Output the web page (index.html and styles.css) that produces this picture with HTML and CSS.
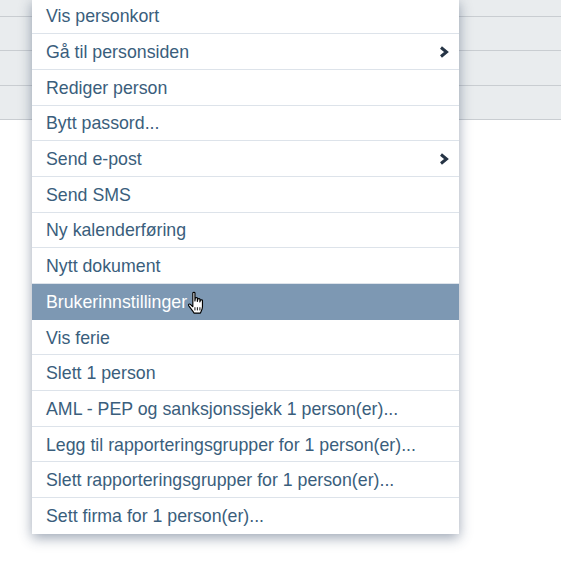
FILE: index.html
```html
<!DOCTYPE html>
<html lang="nb">

<head>
    <meta charset="UTF-8">
    <meta name="viewport" content="width=device-width, initial-scale=1.0">
    <title>Personmeny</title>
    <link rel="stylesheet" href="styles.css">
</head>

<body>

    <div class="rows">
        <div class="row first"></div>
        <div class="row"></div>
        <div class="row"></div>
        <div class="row"></div>
    </div>

    <ul class="menu">
        <li class="item">Vis personkort</li>
        <li class="item sub">Gå til personsiden
            <svg class="chev" viewBox="0 0 10 12" width="10" height="12"><path d="M2 1.5 L7.5 6 L2 10.5" fill="none" stroke="#263445" stroke-width="3"/></svg>
        </li>
        <li class="item">Rediger person</li>
        <li class="item">Bytt passord...</li>
        <li class="item sub">Send e-post
            <svg class="chev" viewBox="0 0 10 12" width="10" height="12"><path d="M2 1.5 L7.5 6 L2 10.5" fill="none" stroke="#263445" stroke-width="3"/></svg>
        </li>
        <li class="item">Send SMS</li>
        <li class="item">Ny kalenderføring</li>
        <li class="item">Nytt dokument</li>
        <li class="item active">Brukerinnstillinger
            <svg class="hand" viewBox="0 0 17 22" width="18" height="24">
                <path d="M5.5 1.5 C5.5 0.7 7.5 0.7 7.5 1.5 L7.5 9 L7.8 6.6 C7.8 5.8 9.8 5.8 9.8 6.6 L9.8 9.5 L10.2 7.4 C10.2 6.6 12.2 6.6 12.2 7.4 L12.2 10 L12.6 8.6 C12.6 7.9 14.6 7.9 14.6 8.6 L14.6 14.5 C14.6 17 13.4 18.5 12.6 20.5 L6.6 20.5 C5.6 18.6 3.5 16.2 1.6 13.6 C0.9 12.6 2.2 11.4 3.2 12.3 L5.5 14.5 Z" fill="#fff" stroke="#000" stroke-width="1.1" stroke-linejoin="round"/>
                <path d="M7.5 15 V18 M9.8 15 V18 M12.2 15 V18" stroke="#000" stroke-width="0.9"/>
            </svg>
        </li>
        <li class="item">Vis ferie</li>
        <li class="item">Slett 1 person</li>
        <li class="item">AML - PEP og sanksjonssjekk 1 person(er)...</li>
        <li class="item">Legg til rapporteringsgrupper for 1 person(er)...</li>
        <li class="item">Slett rapporteringsgrupper for 1 person(er)...</li>
        <li class="item">Sett firma for 1 person(er)...</li>
    </ul>

</body>

</html>
```

FILE: styles.css
```css
body {
    margin: 0;
    font-family: "Liberation Sans", Arial, sans-serif;
    background: #fff;
    position: relative;
    height: 586px;
    overflow: hidden;
}

.rows {
    background: #e9ecee;
}

.row {
    height: 34.5px;
    border-bottom: 1px solid #c9cdd1;
    box-sizing: border-box;
}

.row.first {
    height: 16.5px;
}

.menu {
    position: absolute;
    top: -1.5px;
    left: 32px;
    width: 427px;
    margin: 0;
    padding: 0;
    list-style: none;
    background: #fff;
    box-shadow: 0 4px 12px rgba(40, 60, 90, 0.45);
}

.item {
    height: 35.7px;
    box-sizing: border-box;
    padding: 2px 14px 0;
    border-bottom: 1px solid #dde3ea;
    display: flex;
    align-items: center;
    font-size: 17.75px;
    color: #3a5e7c;
    position: relative;
}

.item:last-child {
    border-bottom: none;
}

.item.active {
    background: #7d98b3;
    color: #fff;
    border-bottom-color: #7d98b3;
}

.chev {
    position: absolute;
    right: 10px;
    top: 12px;
}

.hand {
    margin-left: 0;
    margin-top: 1px;
}
```
